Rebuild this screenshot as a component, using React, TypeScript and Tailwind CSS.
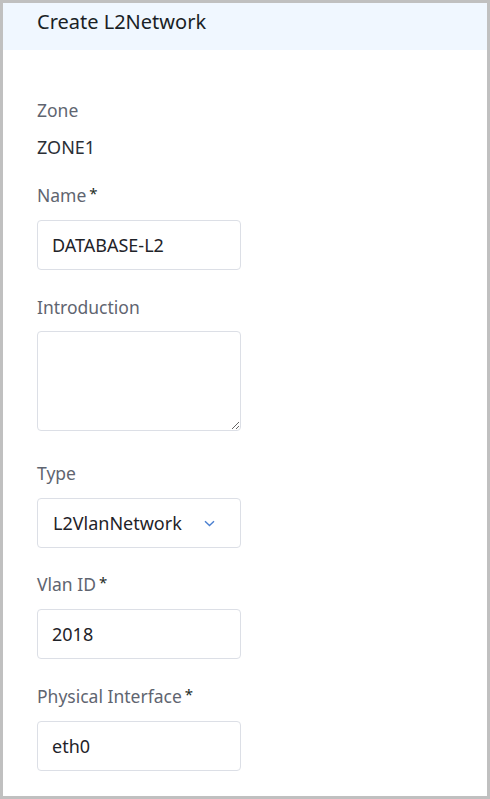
import React from "react";

const font = { fontFamily: '"Noto Sans", "Open Sans", Arial, sans-serif' };

function Label({ children, required }: { children: React.ReactNode; required?: boolean }) {
  return (
    <div className="h-[24px] leading-[24px] text-[17.5px] text-[#5f6570] flex items-center">
      <span>{children}</span>
      {required && <span className="ml-[3px] text-[#1d2b1f] text-[15px] relative top-[-2px]">*</span>}
    </div>
  );
}

function Input({ value }: { value: string }) {
  return (
    <div className="mt-[13px] w-[204px] h-[50px] border border-[#dcdfe6] rounded-[4px] bg-white flex items-center pl-[14px] text-[18px] text-[#1f2329]">
      {value}
    </div>
  );
}

export default function App() {
  return (
    <div style={font} className="w-[490px] h-[799px] box-border border-[3px] border-[#c0c0c0] bg-white overflow-hidden">
      <div className="h-[47px] bg-[#f0f7ff] pl-[34px] pt-[6px]">
        <div className="text-[20px] leading-[26px] text-[#1a1f26]">Create L2Network</div>
      </div>
      <div className="pl-[34px] flex flex-col pt-[48px]">
        <Label>Zone</Label>
        <div className="mt-[13px] h-[24px] leading-[24px] text-[18px] text-[#2a2f36]">ZONE1</div>

        <div className="mt-[24px]">
          <Label required>Name</Label>
          <Input value="DATABASE-L2" />
        </div>

        <div className="mt-[25px]">
          <Label>Introduction</Label>
          <div className="mt-[12px] h-[100px]">
            <textarea className="w-[204px] h-[100px] block border border-[#dcdfe6] rounded-[4px] outline-none" />
          </div>
        </div>

        <div className="mt-[30px]">
          <Label>Type</Label>
          <div className="mt-[13px] w-[204px] h-[50px] border border-[#dcdfe6] rounded-[4px] bg-white flex items-center pl-[15px] text-[18px] text-[#1f2329]">
            <span>L2VlanNetwork</span>
            <svg className="ml-[22px]" width="11" height="7" viewBox="0 0 11 7" fill="none">
              <path d="M1 1.2 L5.5 5.5 L10 1.2" stroke="#4a7fd0" strokeWidth="1.4" />
            </svg>
          </div>
        </div>

        <div className="mt-[24px]">
          <Label required>Vlan ID</Label>
          <Input value="2018" />
        </div>

        <div className="mt-[25px]">
          <Label required>Physical Interface</Label>
          <Input value="eth0" />
        </div>
      </div>
    </div>
  );
}
